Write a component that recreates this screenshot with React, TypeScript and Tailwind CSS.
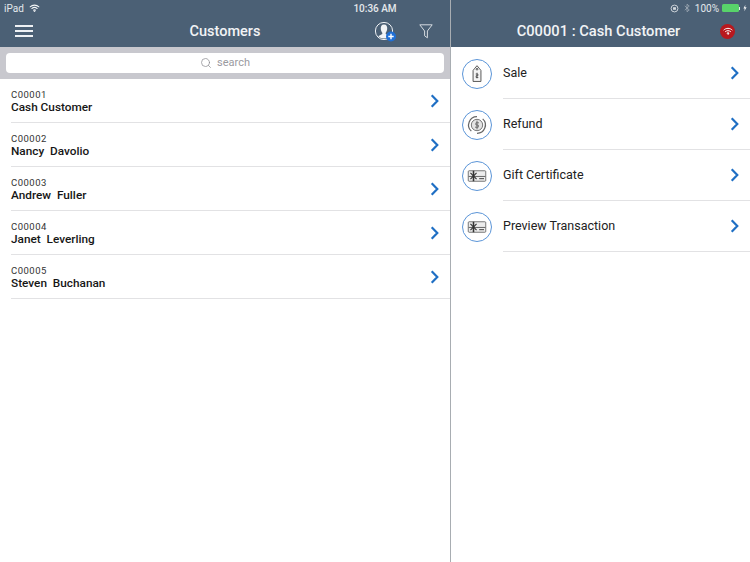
import { Search } from "lucide-react"

const customers = [
  { id: "C00001", name: "Cash Customer" },
  { id: "C00002", name: "Nancy  Davolio" },
  { id: "C00003", name: "Andrew  Fuller" },
  { id: "C00004", name: "Janet  Leverling" },
  { id: "C00005", name: "Steven  Buchanan" },
]

function Chevron({ className }: { className?: string }) {
  return (
    <svg viewBox="0 0 10 16" className={className} fill="none" stroke="#1f6fc4" strokeWidth="2.5">
      <path d="M1.8 1.5 L8.2 8 L1.8 14.5" />
    </svg>
  )
}

function Wifi({ color = "#f3f5f7", className }: { color?: string; className?: string }) {
  return (
    <svg viewBox="0 0 16 12" className={className} fill="none" stroke={color} strokeWidth="1.6" strokeLinecap="round">
      <path d="M1.5 4.2 C5 0.8 11 0.8 14.5 4.2" />
      <path d="M4 6.8 C6.2 4.9 9.8 4.9 12 6.8" />
      <path d="M6.5 9.2 C7.4 8.5 8.6 8.5 9.5 9.2" />
      <circle cx="8" cy="10.6" r="0.5" fill={color} />
    </svg>
  )
}

function TagIcon() {
  return (
    <svg viewBox="0 0 32 32" className="w-[28px] h-[28px]" fill="none" stroke="#444" strokeWidth="1">
      <path d="M13 10 L16 6.5 L19 10 L20.5 12 V24.5 H11.5 V12 Z" fill="#f4f4f4" />
      <circle cx="16" cy="10.5" r="1" />
      <path d="M16 14.5 V21 M14.5 16 H17 V18 H15 V20 H17.5" strokeWidth="0.9" />
    </svg>
  )
}

function CoinIcon() {
  return (
    <svg viewBox="0 0 32 32" className="w-[28px] h-[28px]" fill="none" stroke="#666" strokeWidth="1">
      <path d="M16 6.5 A9.5 9.5 0 0 0 9.5 23" strokeWidth="1.4" />
      <path d="M16 25.5 A9.5 9.5 0 0 0 22.5 9" strokeWidth="1.4" />
      <circle cx="16" cy="16" r="6.5" fill="#e4e4e4" />
      <path d="M16 11 V21 M18.2 13.5 H14.8 V16 H17.4 V18.5 H13.8" strokeWidth="1.1" />
    </svg>
  )
}

function CardIcon() {
  return (
    <svg viewBox="0 0 32 32" className="w-[28px] h-[28px]" fill="none">
      <rect x="6" y="10" width="20" height="12" rx="1" fill="#ececec" stroke="#555" strokeWidth="0.9" />
      <path d="M6.5 16.5 H25.5" stroke="#444" strokeWidth="0.9" />
      <path d="M12 10 V22" stroke="#333" strokeWidth="1.8" />
      <path d="M8.5 12.5 L15.5 19.5 M15.5 12.5 L8.5 19.5" stroke="#333" strokeWidth="1.3" />
      <path d="M18.5 19 H24" stroke="#555" strokeWidth="1.3" />
    </svg>
  )
}

const actions = [
  { label: "Sale", icon: <TagIcon /> },
  { label: "Refund", icon: <CoinIcon /> },
  { label: "Gift Certificate", icon: <CardIcon /> },
  { label: "Preview Transaction", icon: <CardIcon /> },
]

export default function App() {
  return (
    <div className="relative w-[750px] h-[562px] flex bg-white overflow-hidden font-['Roboto',sans-serif] text-[#1b1b1b]">
      {/* status bar sits over both panes */}
      <div className="absolute top-0 left-0 right-0 h-[16px] grid grid-cols-3 items-center px-[4px] text-[10px] text-[#e4e8ec]">
        <div className="flex items-center gap-[5px]">
          <span>iPad</span>
          <Wifi className="w-[11px] h-[8px]" />
        </div>
        <div className="text-center font-medium whitespace-nowrap">10:36 AM</div>
        <div className="flex items-center justify-end gap-[3px] -mr-px">
          <svg viewBox="0 0 10 10" className="w-[9px] h-[9px] mr-[2px]" fill="none" stroke="#d8dde2" strokeWidth="1">
            <circle cx="5" cy="5" r="3.8" />
            <rect x="3.4" y="3.6" width="3.2" height="2.8" fill="#d8dde2" stroke="none" />
          </svg>
          <svg viewBox="0 0 8 12" className="w-[6px] h-[10px] mr-[2px]" fill="none" stroke="#aeb8c1" strokeWidth="0.9">
            <path d="M1 3.2 L7 8.6 L4 11 V1 L7 3.4 L1 8.8" />
          </svg>
          <span className="text-[10px]">100%</span>
          <div className="w-[17px] h-[8px] bg-[#58d36a] rounded-[1.5px]" />
          <div className="w-px h-[3px] bg-[#e4e8ec] -ml-[3px]" />
          <svg viewBox="0 0 6 10" className="w-[4px] h-[8px]" fill="#f0f2f4">
            <path d="M3.6 0 L0.6 5.6 H2.6 L2 10 L5.4 4 H3.2 Z" />
          </svg>
        </div>
      </div>

      {/* customers pane */}
      <div className="w-[450px] flex flex-col">
        <header className="h-[47px] bg-[#4b6075] pt-[15px] text-white">
          <div className="h-[32px] relative flex items-center justify-between pl-[15px] pr-[17px]">
            <div className="flex flex-col gap-[3.5px] w-[18px]">
              <div className="h-[1.5px] bg-[#eef1f4]" />
              <div className="h-[1.5px] bg-[#eef1f4]" />
              <div className="h-[1.5px] bg-[#eef1f4]" />
            </div>
            <h1 className="absolute left-0 right-0 pt-px text-center text-[14.5px] font-medium text-[#f1f3f5]">Customers</h1>
            <div className="flex items-center gap-[21px]">
              <svg viewBox="0 0 24 22" className="w-[24px] h-[22px] mt-[2px]">
                <circle cx="10" cy="10" r="8.6" fill="none" stroke="#eef1f4" strokeWidth="1" />
                <path d="M10 3.5 C7.5 3.5 6.6 5.5 6.8 8 C7 10 7.8 11 8.3 11.8 V13 L4.2 15.2 A8.4 8.4 0 0 0 15.8 15.2 L11.7 13 V11.8 C12.2 11 13 10 13.2 8 C13.4 5.5 12.5 3.5 10 3.5 Z" fill="#f2f4f6" />
                <circle cx="17" cy="15.5" r="5" fill="#1f6fd6" />
                <path d="M17 12.8 V18.2 M14.3 15.5 H19.7" stroke="#fff" strokeWidth="1.4" />
              </svg>
              <svg viewBox="0 0 14 15" className="w-[14px] h-[15px]" fill="none" stroke="#d5dbe0" strokeWidth="1">
                <path d="M0.8 0.8 H13.2 L8.4 7 V13.8 L5.6 11.8 V7 Z" />
              </svg>
            </div>
          </div>
        </header>

        <div className="bg-[#c8c8ce] px-[6px] py-[6px]">
          <div className="h-[20px] bg-white rounded-[4px] flex items-center justify-center gap-[5px] text-[11px] text-[#9a9a9f]">
            <Search className="w-[12px] h-[12px] text-[#8e8e93]" strokeWidth={1.5} />
            <span className="pt-px">search</span>
          </div>
        </div>

        <ul className="pl-[11px]">
          {customers.map((c) => (
            <li key={c.id} className="h-[44px] border-b border-[#e2e2e4] flex items-center justify-between pr-[11px]">
              <div className="pt-[2px]">
                <div className="text-[9.5px] leading-[10px] tracking-[0.5px] text-[#333]">{c.id}</div>
                <div className="text-[11.8px] leading-[14px] font-medium whitespace-pre text-[#161616]">{c.name}</div>
              </div>
              <Chevron className="w-[9px] h-[14px]" />
            </li>
          ))}
        </ul>
      </div>

      <div className="w-px bg-[#a8adb2]" />

      {/* actions pane */}
      <div className="flex-1 flex flex-col">
        <header className="h-[47px] bg-[#4b6075] pt-[15px] text-white">
          <div className="h-[32px] relative flex items-center justify-end pr-[15px]">
            <h2 className="absolute left-0 right-0 pr-[4px] text-center text-[14.7px] font-medium text-[#f1f3f5]">C00001 : Cash Customer</h2>
            <div className="w-[15px] h-[15px] rounded-full bg-[#b8181e] flex items-center justify-center">
              <Wifi className="w-[10px] h-[8px]" color="#ffffff" />
            </div>
          </div>
        </header>

        <ul className="mt-px">
          {actions.map((a) => (
            <li key={a.label} className="h-[51px] flex items-center">
              <div className="pl-[11px] w-[52px] shrink-0">
                <div className="w-[30px] h-[30px] rounded-full border-[1.5px] border-[#5b95d8] flex items-center justify-center">
                  {a.icon}
                </div>
              </div>
              <div className="flex-1 h-full flex items-center justify-between border-b border-[#e2e2e4] pr-[11px]">
                <span className="text-[12.5px] text-[#222]">{a.label}</span>
                <Chevron className="w-[9px] h-[14px]" />
              </div>
            </li>
          ))}
        </ul>
      </div>
    </div>
  )
}
